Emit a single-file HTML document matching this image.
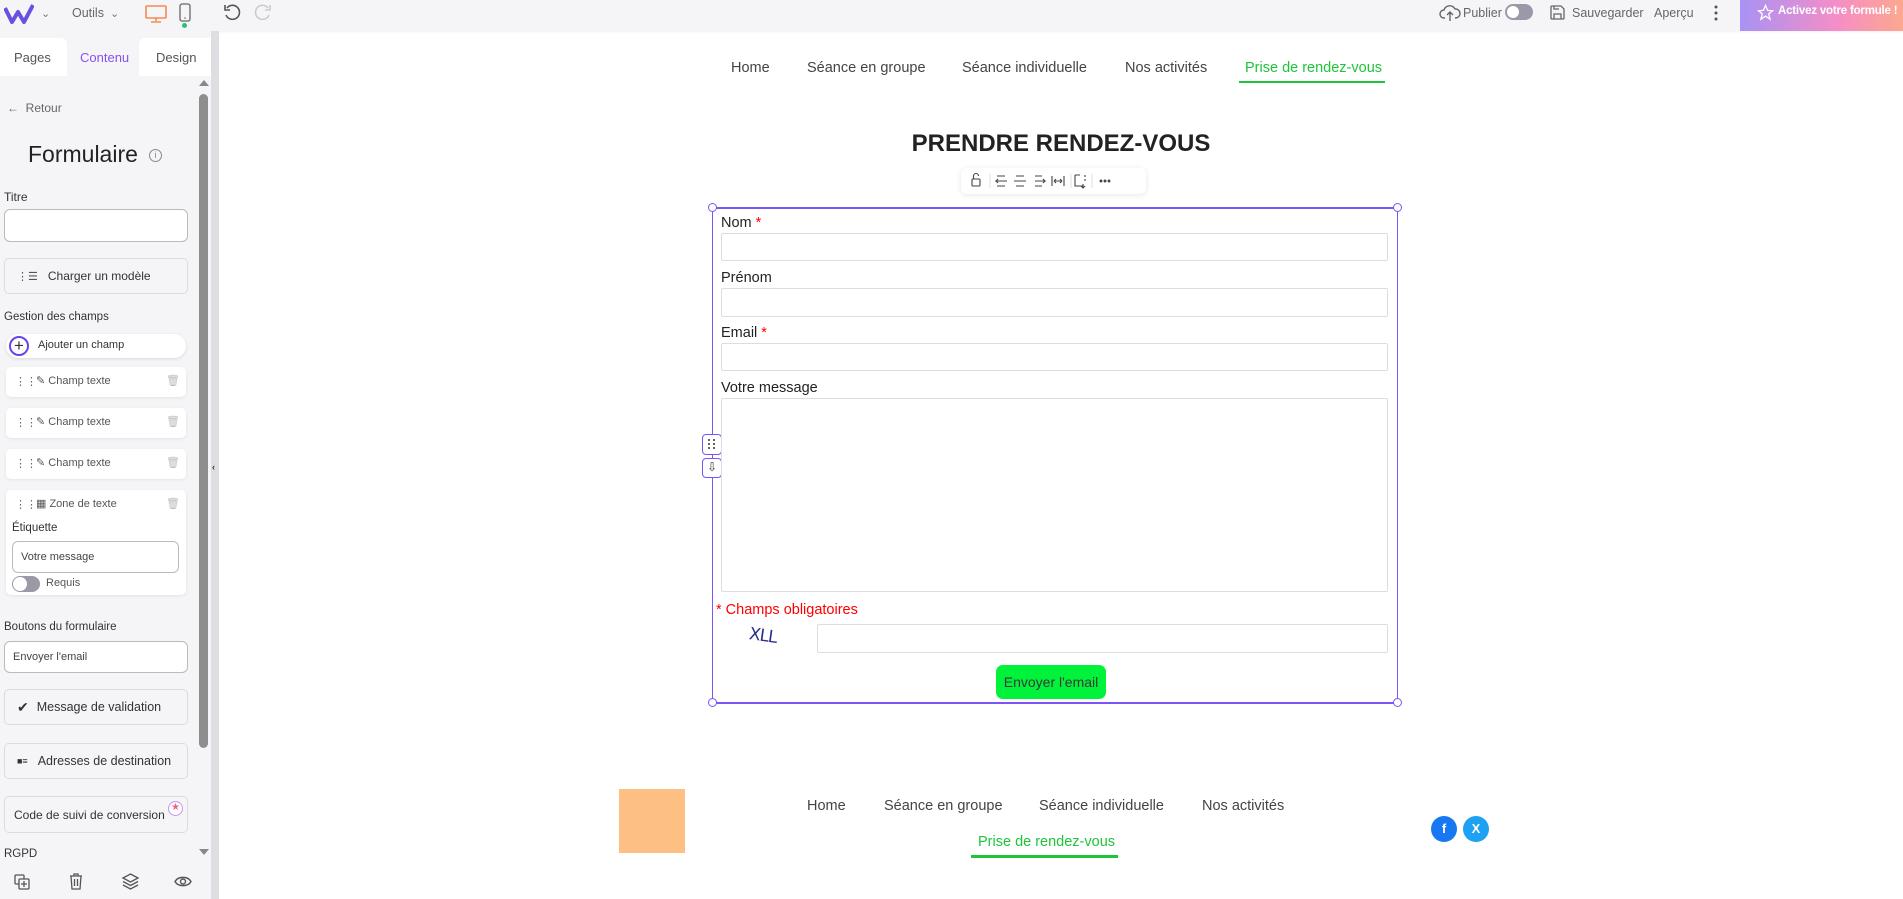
<!DOCTYPE html>
<html><head><meta charset="utf-8"><style>
*{margin:0;padding:0;box-sizing:border-box}
body{width:1903px;height:899px;position:relative;overflow:hidden;background:#fff;font-family:"Liberation Sans",sans-serif;color:#333}
.a{position:absolute}
.sb{font-size:12px;color:#333}
.btn{position:absolute;left:4px;width:184px;border:1px solid #dcdce0;border-radius:5px;background:#f5f5f7;font-size:12.5px;color:#333;display:flex;align-items:center;padding-left:12px}
.item{position:absolute;left:6px;width:180px;height:30px;background:#fff;border-radius:5px;box-shadow:0 1px 3px rgba(0,0,0,.08);font-size:11px;color:#555}
.nav{position:absolute;font-size:14.5px;color:#444;white-space:nowrap}
.lab{position:absolute;left:721px;font-size:14.5px;color:#222}
.inp{position:absolute;left:721px;width:667px;border:1px solid #ddd;border-radius:2px;background:#fff}
.red{color:#f00}
.hd{position:absolute;width:9px;height:9px;border:1.5px solid #7b55f5;border-radius:50%;background:#fff}
.tt{position:absolute;top:6px;font-size:12.5px;color:#666;white-space:nowrap}
</style></head><body>
<!-- top bar -->
<div class="a" style="left:0;top:0;width:1903px;height:31px;background:#f5f5f7;box-shadow:0 1px 2px rgba(0,0,0,.06)"></div>
<svg class="a" style="left:4px;top:4px" width="30" height="20" viewBox="0 0 30 20"><path d="M1 4 L8 18 L14 8 L20 18 L29 1" fill="none" stroke="#6b4fe0" stroke-width="4" stroke-linejoin="round"/></svg>
<div class="tt" style="left:41px;top:7px;font-size:11px;color:#777">&#8964;</div>
<div class="tt" style="left:72px">Outils</div>
<div class="tt" style="left:110px;top:7px;font-size:11px;color:#777">&#8964;</div>
<svg class="a" style="left:145px;top:5px" width="22" height="18" viewBox="0 0 22 18"><rect x="1" y="1" width="20" height="12" rx="1" fill="none" stroke="#f58c4c" stroke-width="1.6"/><path d="M11 13v3M6 17h10" stroke="#f58c4c" stroke-width="1.6"/></svg>
<svg class="a" style="left:179px;top:3px" width="12" height="20" viewBox="0 0 12 20"><rect x="1" y="1" width="10" height="17" rx="2" fill="none" stroke="#666" stroke-width="1.3"/><circle cx="6" cy="15" r=".8" fill="#666"/></svg>
<div class="a" style="left:182px;top:23px;width:5px;height:5px;border-radius:50%;background:#2cbf7a"></div>
<svg class="a" style="left:222px;top:3px" width="20" height="20" viewBox="0 0 20 20"><path d="M5 5 A7 7 0 1 1 4 12" fill="none" stroke="#555" stroke-width="1.6"/><path d="M3 2v5h5" fill="none" stroke="#555" stroke-width="1.6"/></svg>
<svg class="a" style="left:253px;top:3px" width="20" height="20" viewBox="0 0 20 20"><path d="M15 5 A7 7 0 1 0 16 12" fill="none" stroke="#ccc" stroke-width="1.6"/><path d="M17 2v5h-5" fill="none" stroke="#ccc" stroke-width="1.6"/></svg>
<svg class="a" style="left:1439px;top:4px" width="22" height="18" viewBox="0 0 22 18"><path d="M6 14H5a4 4 0 0 1 0-8 6 6 0 0 1 11-1 4 4 0 0 1 1 9h-1M11 8v9M8 11l3-3 3 3" fill="none" stroke="#666" stroke-width="1.4"/></svg>
<div class="tt" style="left:1463px">Publier</div>
<div class="a" style="left:1505px;top:4px;width:28px;height:16px;border-radius:8px;background:#9a99a8"><div style="position:absolute;left:2px;top:2px;width:12px;height:12px;border-radius:50%;background:#fff"></div></div>
<svg class="a" style="left:1549px;top:4px" width="17" height="17" viewBox="0 0 17 17"><path d="M2 3a1 1 0 0 1 1-1h9l3 3v9a1 1 0 0 1-1 1H3a1 1 0 0 1-1-1zM5 15v-5h7v5M5 2v3h5" fill="none" stroke="#666" stroke-width="1.3"/></svg>
<div class="tt" style="left:1572px">Sauvegarder</div>
<div class="tt" style="left:1654px">Aperçu</div>
<svg class="a" style="left:1713px;top:4px" width="6" height="18" viewBox="0 0 6 18"><circle cx="3" cy="3" r="1.5" fill="#555"/><circle cx="3" cy="9" r="1.5" fill="#555"/><circle cx="3" cy="15" r="1.5" fill="#555"/></svg>
<div class="a" style="left:1740px;top:0;width:163px;height:31px;background:linear-gradient(90deg,#a892f5,#f58ec6 60%,#fca88e)"></div>
<svg class="a" style="left:1757px;top:4px" width="17" height="17" viewBox="0 0 24 24"><path d="M12 2l3 7 7 .5-5.5 4.5 2 7.5L12 17l-6.5 4.5 2-7.5L2 9.5 9 9z" fill="none" stroke="#fff" stroke-width="1.8"/></svg>
<div class="a" style="left:1778px;top:5px;font-size:11.5px;color:#fff;font-weight:bold;white-space:nowrap;letter-spacing:-.2px">Activez votre formule !</div>

<!-- sidebar -->
<div class="a" style="left:0;top:31px;width:211px;height:868px;background:#f5f5f7"></div>
<div class="a" style="left:211px;top:31px;width:8px;height:868px;background:#dddde2"></div>
<div class="a" style="left:212px;top:462px;font-size:9px;color:#333;font-weight:bold">&lsaquo;</div>
<div class="a" style="left:0;top:38px;width:67px;height:38px;background:#fff;border-radius:0 6px 0 0"></div>
<div class="a" style="left:139px;top:38px;width:72px;height:38px;background:#fff;border-radius:6px 0 0 0"></div>
<div class="a" style="left:14px;top:50px;font-size:13px;color:#555">Pages</div>
<div class="a" style="left:80px;top:50px;font-size:13px;color:#8a4ff2">Contenu</div>
<div class="a" style="left:156px;top:50px;font-size:13px;color:#555">Design</div>
<div class="a" style="left:199px;top:80px;width:0;height:0;border:5px solid transparent;border-bottom:6px solid #888;border-top:0"></div>
<div class="a" style="left:199px;top:94px;width:9px;height:654px;background:#8e8e8e;border-radius:5px"></div>
<div class="a" style="left:199px;top:849px;width:0;height:0;border:5px solid transparent;border-top:6px solid #888;border-bottom:0"></div>
<div class="a" style="left:7px;top:101px;font-size:12px;color:#666">&#8592;&nbsp; Retour</div>
<div class="a" style="left:28px;top:141px;font-size:23px;color:#222">Formulaire</div>
<div class="a" style="left:149px;top:149px;width:13px;height:13px;border:1.3px solid #888;border-radius:50%;font-size:9px;color:#888;text-align:center;line-height:11px">i</div>
<div class="a sb" style="left:4px;top:190px">Titre</div>
<div class="a" style="left:4px;top:209px;width:184px;height:33px;border:1px solid #bbb;border-radius:6px;background:#fff"></div>
<div class="btn" style="top:258px;height:36px"><span style="font-size:11px;color:#555;margin-right:10px">&#8942;&#9776;</span><span style="font-size:12px">Charger un modèle</span></div>
<div class="a sb" style="left:4px;top:311px;font-size:11.5px">Gestion des champs</div>
<div class="a" style="left:6px;top:334px;width:180px;height:24px;background:#fff;border-radius:12px;box-shadow:0 1px 3px rgba(0,0,0,.12)"></div>
<div class="a" style="left:9px;top:336px;width:20px;height:20px;border:2px solid #6b44e8;border-radius:50%;text-align:center;line-height:15px;font-size:17px;color:#333">+</div>
<div class="a" style="left:38px;top:339px;font-size:11px;color:#333">Ajouter un champ</div>
<div class="item" style="top:367px"><span class="a" style="left:9px;top:8px;color:#666">&#8942;&#8942;</span><span class="a" style="left:30px;top:7px">&#9998; Champ texte</span><span class="a" style="left:160px;top:7px;color:#bbb">&#128465;</span></div>
<div class="item" style="top:408px"><span class="a" style="left:9px;top:8px;color:#666">&#8942;&#8942;</span><span class="a" style="left:30px;top:7px">&#9998; Champ texte</span><span class="a" style="left:160px;top:7px;color:#bbb">&#128465;</span></div>
<div class="item" style="top:449px"><span class="a" style="left:9px;top:8px;color:#666">&#8942;&#8942;</span><span class="a" style="left:30px;top:7px">&#9998; Champ texte</span><span class="a" style="left:160px;top:7px;color:#bbb">&#128465;</span></div>
<div class="item" style="top:490px;height:105px"><span class="a" style="left:9px;top:8px;color:#666">&#8942;&#8942;</span><span class="a" style="left:30px;top:7px">&#9638; Zone de texte</span><span class="a" style="left:160px;top:7px;color:#bbb">&#128465;</span>
<span class="a" style="left:6px;top:32px;font-size:11.5px;color:#333">Étiquette</span>
<div class="a" style="left:6px;top:51px;width:167px;height:32px;border:1px solid #bbb;border-radius:6px;padding:9px 8px;font-size:11px;color:#444">Votre message</div>
<div class="a" style="left:6px;top:86px;width:28px;height:16px;border-radius:8px;background:#9a99a8"><div style="position:absolute;left:1px;top:1px;width:14px;height:14px;border-radius:50%;background:#fff"></div></div>
<span class="a" style="left:40px;top:87px;font-size:11px">Requis</span></div>
<div class="a sb" style="left:4px;top:621px;font-size:11.5px">Boutons du formulaire</div>
<div class="a" style="left:4px;top:641px;width:184px;height:32px;border:1px solid #bbb;border-radius:6px;background:#fff;padding:9px 8px;font-size:11px;color:#444">Envoyer l'email</div>
<div class="btn" style="top:689px;height:36px"><span style="font-size:14px;margin-right:8px">&#10004;</span>Message de validation</div>
<div class="btn" style="top:743px;height:36px"><span style="font-size:9px;margin-right:10px">&#9632;&#8801;</span>Adresses de destination</div>
<div class="btn" style="top:796px;height:37px;padding-left:9px;font-size:12px">Code de suivi de conversion</div>
<div class="a" style="left:168px;top:801px;width:15px;height:15px;border-radius:50%;border:1.5px solid #c494f0;background:#fff;text-align:center;font-size:10px;line-height:12px;color:#f06090">&#9733;</div>
<div class="a sb" style="left:4px;top:848px;font-size:11.5px">RGPD</div>
<div class="a" style="left:0;top:862px;width:211px;height:37px;background:#f5f5f7"></div>
<svg class="a" style="left:14px;top:874px" width="16" height="16" viewBox="0 0 16 16" fill="none" stroke="#555" stroke-width="1.3"><rect x="1" y="1" width="9" height="9" rx="1"/><rect x="5" y="5" width="10" height="10" rx="1" fill="#f5f5f7"/><path d="M10 7v6M7 10h6"/></svg>
<svg class="a" style="left:69px;top:873px" width="14" height="17" viewBox="0 0 14 17" fill="none" stroke="#555" stroke-width="1.3"><path d="M1 3h12M5 3V1h4v2M2 3l1 13h8l1-13M5.5 6v7M8.5 6v7"/></svg>
<svg class="a" style="left:122px;top:873px" width="17" height="17" viewBox="0 0 17 17" fill="none" stroke="#555" stroke-width="1.3"><path d="M8.5 1L16 5 8.5 9 1 5z M1 8.5l7.5 4 7.5-4 M1 12l7.5 4 7.5-4"/></svg>
<svg class="a" style="left:174px;top:875px" width="18" height="13" viewBox="0 0 18 13" fill="none" stroke="#555" stroke-width="1.4"><path d="M1 6.5C4 1 14 1 17 6.5 14 12 4 12 1 6.5z"/><circle cx="9" cy="6.5" r="2.5"/></svg>

<!-- canvas nav -->
<div class="nav" style="left:731px;top:60px">Home</div>
<div class="nav" style="left:807px;top:60px">Séance en groupe</div>
<div class="nav" style="left:962px;top:60px">Séance individuelle</div>
<div class="nav" style="left:1125px;top:60px">Nos activités</div>
<div class="nav" style="left:1245px;top:60px;color:#1ec43a">Prise de rendez-vous</div>
<div class="a" style="left:1239px;top:81px;width:146px;height:2px;background:#1ec43a"></div>
<div class="a" style="left:861px;top:130px;width:400px;text-align:center;font-size:24px;font-weight:bold;color:#222;white-space:nowrap">PRENDRE RENDEZ-VOUS</div>
<!-- toolbar -->
<div class="a" style="left:961px;top:168px;width:185px;height:26px;background:#fff;border-radius:6px;box-shadow:0 1px 6px rgba(0,0,0,.1)"></div>
<svg class="a" style="left:961px;top:168px" width="185" height="26" viewBox="0 0 185 26" fill="none" stroke="#444" stroke-width="1.1"><rect x="11" y="11" width="8" height="7" rx="1"/><path d="M12.5 11V8a2.5 2.5 0 0 1 5 0"/><path d="M36 8h8M36 18h8M46 13h-11l2-2M35 13l2 2"/><path d="M55 8h8M53 13h12M55 18h8"/><path d="M74 8h7M74 18h7M74 13h10l-2-2M84 13l-2 2"/><path d="M91 8v10M103 8v10M93 13h8M93 13l2-2M93 13l2 2M101 13l-2-2M101 13l-2 2"/><path d="M114 7h5M114 7v11h8M122 16v4M120 18l2 2 2-2M124 7v2M124 11v2"/><path d="M29 6v14M110 6v14M131 6v14" stroke="#e4e4e4"/><circle cx="140" cy="13" r=".9" fill="#444"/><circle cx="144" cy="13" r=".9" fill="#444"/><circle cx="148" cy="13" r=".9" fill="#444"/></svg>

<!-- form box -->
<div class="a" style="left:712px;top:207px;width:686px;height:497px;border:1.5px solid #7b55f5;border-top-width:2px;border-bottom-width:2px"></div>
<div class="hd" style="left:708px;top:203px"></div><div class="hd" style="left:1393px;top:203px"></div>
<div class="hd" style="left:708px;top:698px"></div><div class="hd" style="left:1393px;top:698px"></div>
<div class="a" style="left:702px;top:434px;width:20px;height:21px;border:1.5px solid #7b55f5;border-radius:4px;background:#fff"><svg width="17" height="18" viewBox="0 0 17 18"><g fill="#333"><circle cx="6" cy="5" r="1"/><circle cx="11" cy="5" r="1"/><circle cx="6" cy="9" r="1"/><circle cx="11" cy="9" r="1"/><circle cx="6" cy="13" r="1"/><circle cx="11" cy="13" r="1"/></g></svg></div>
<div class="a" style="left:702px;top:458px;width:20px;height:20px;border:1.5px solid #7b55f5;border-radius:4px;background:#fff;text-align:center;font-size:12px;line-height:16px;color:#333">&#8681;</div>
<div class="lab" style="top:215px">Nom <span class="red">*</span></div>
<div class="inp" style="top:233px;height:28px"></div>
<div class="lab" style="top:270px">Prénom</div>
<div class="inp" style="top:288px;height:29px"></div>
<div class="lab" style="top:325px">Email <span class="red">*</span></div>
<div class="inp" style="top:343px;height:28px"></div>
<div class="lab" style="top:380px">Votre message</div>
<div class="inp" style="top:398px;height:194px"></div>
<div class="a" style="left:716px;top:602px;font-size:14.5px;color:#f00">* Champs obligatoires</div>
<div class="a" style="left:749px;top:626px;font-size:17px;color:#2a2f8a;font-family:'DejaVu Sans',sans-serif;transform:rotate(8deg);letter-spacing:-1px">XLL</div>
<div class="inp" style="left:817px;width:571px;top:624px;height:29px"></div>
<div class="a" style="left:996px;top:665px;width:110px;height:34px;border-radius:7px;background:#00f23a;text-align:center;line-height:34px;font-size:14px;color:#3a3a3a">Envoyer l'email</div>

<!-- footer -->
<div class="a" style="left:619px;top:789px;width:66px;height:64px;background:#fdbf82"></div>
<div class="nav" style="left:807px;top:798px">Home</div>
<div class="nav" style="left:884px;top:798px">Séance en groupe</div>
<div class="nav" style="left:1039px;top:798px">Séance individuelle</div>
<div class="nav" style="left:1202px;top:798px">Nos activités</div>
<div class="nav" style="left:978px;top:834px;color:#1ec43a">Prise de rendez-vous</div>
<div class="a" style="left:971px;top:855px;width:147px;height:3px;background:#1ec43a"></div>
<div class="a" style="left:1431px;top:816px;width:26px;height:26px;border-radius:50%;background:#1877f2;color:#fff;text-align:center;line-height:26px;font-size:13px;font-weight:bold">f</div>
<div class="a" style="left:1463px;top:816px;width:26px;height:26px;border-radius:50%;background:#1da1f2;color:#fff;text-align:center;line-height:26px;font-size:13px;font-weight:bold">X</div>
</body></html>
